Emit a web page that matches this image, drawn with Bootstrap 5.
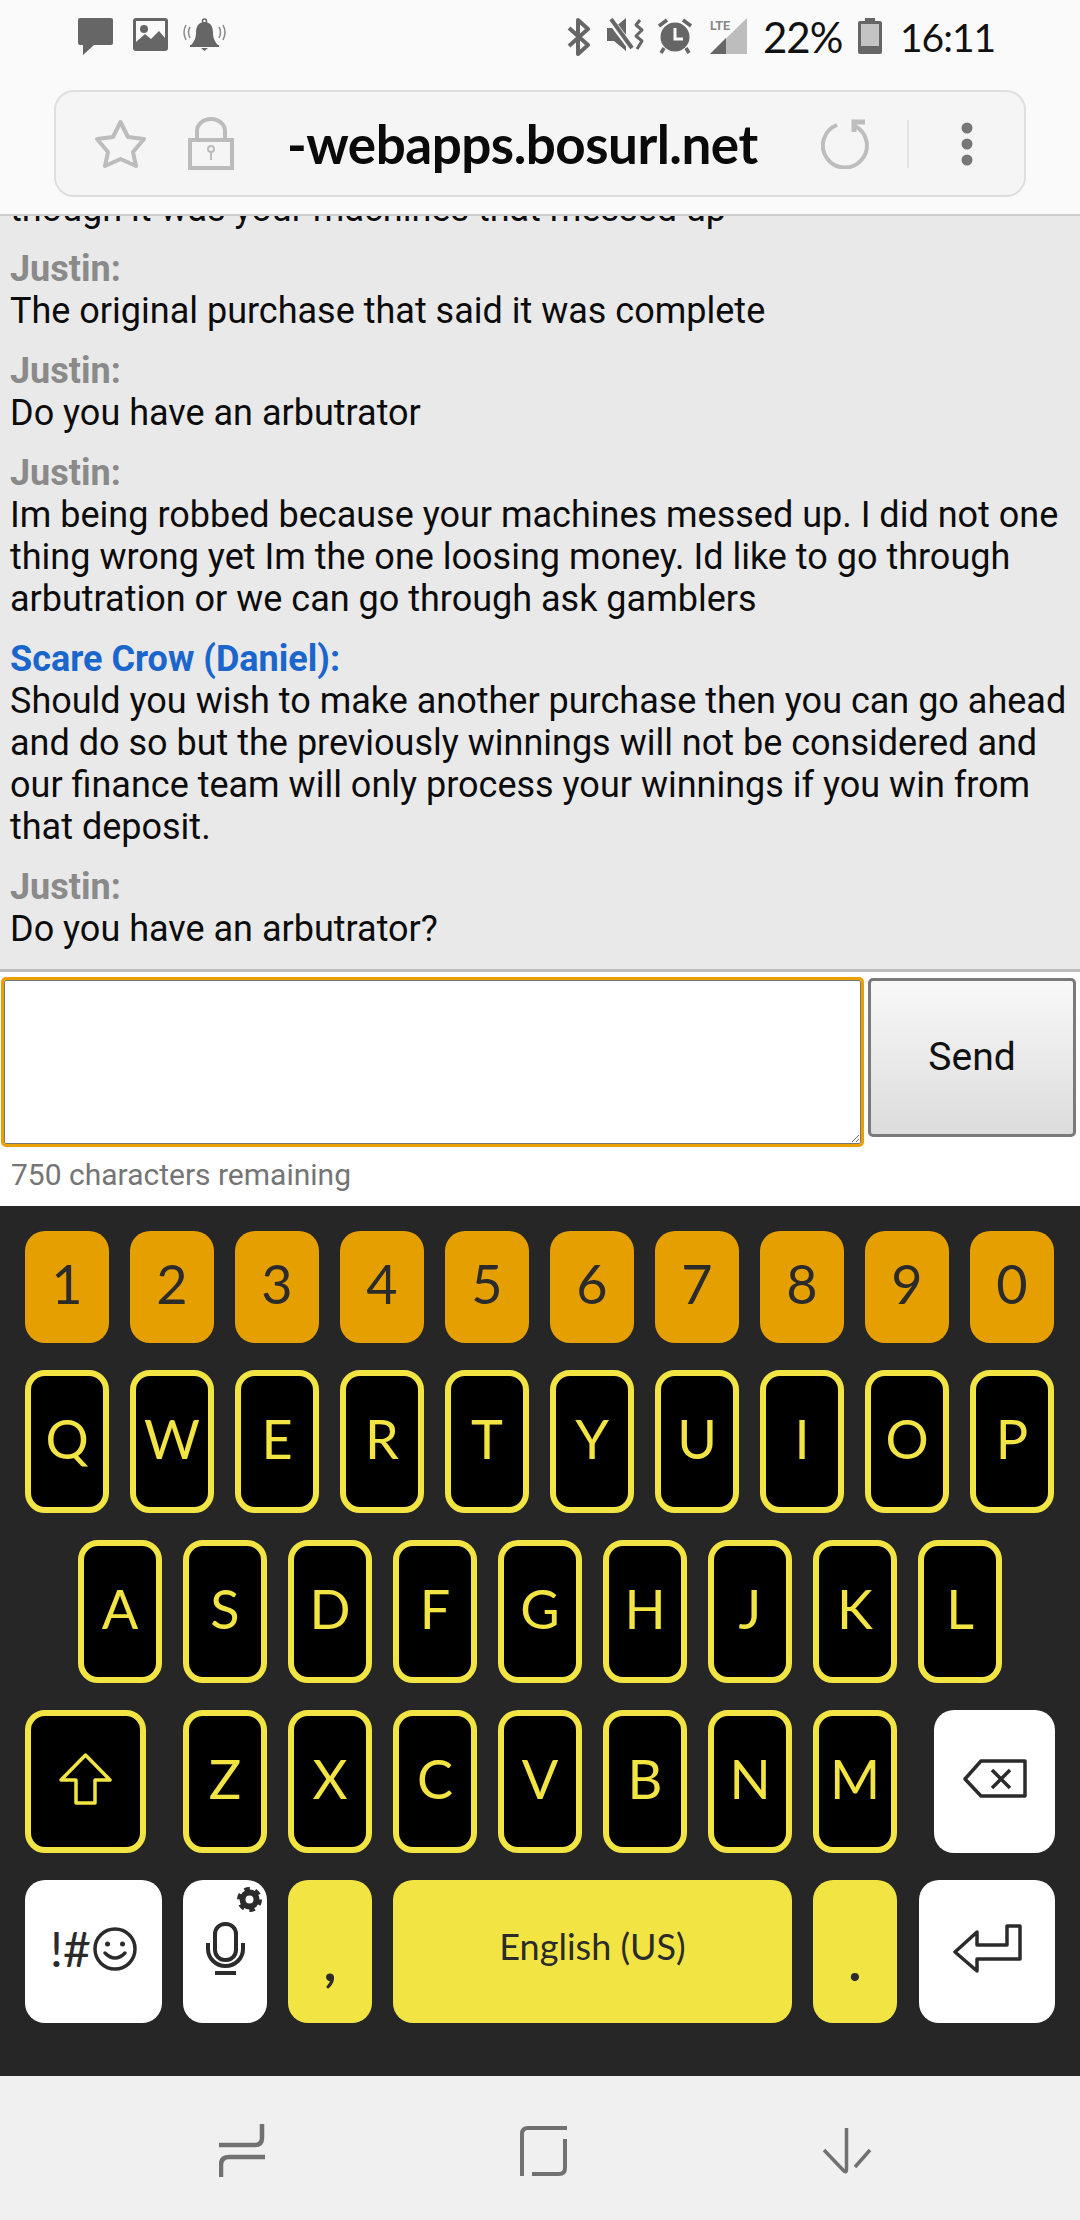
<!DOCTYPE html>
<html lang="en">
<head>
  <meta charset="UTF-8">
  <meta name="viewport" content="width=device-width, initial-scale=1.0">
  <title>Chat</title>
  <link href="https://cdn.jsdelivr.net/npm/bootstrap@5.3.0/dist/css/bootstrap.min.css" rel="stylesheet">
  <style>
    html, body { height: 2220px; overflow: hidden; }
    body { background: #fff; font-family: Roboto, sans-serif; }
    .hand { font-family: Lato, "Noto Sans", sans-serif; }

    /* status bar and address bar */
    .top-area { height: 216px; background: #fafafa; border-bottom: 2px solid #cfcfcf; flex: none; }
    .status-row { height: 90px; padding: 18px 88px 0 78px; align-items: flex-start; }
    .status-left { gap: 20px; }
    .status-left .bell-ico { margin-left: -5px; }
    .status-right svg { margin-left: 17px; }
    .status-right .ico-bt { margin-left: 0; }
    .status-right .ico-alarm { margin-left: 12px; }
    .status-right .ico-batt { margin-left: 15px; }
    .status-text { font-size: 39px; line-height: 38px; color: #111; white-space: nowrap; }
    .status-pct { font-size: 42px; margin-left: 16px; width: 80px; letter-spacing: -1px; }
    .status-time { margin-left: 18px; width: 92px; letter-spacing: -1px; }
    .url-bar { height: 107px; margin: 0 54px; background: #f5f5f5; border: 2px solid #dedede; border-radius: 20px; padding-left: 39px; }
    .url-lock { margin-left: 42px; }
    .url-text { font-size: 53px; font-weight: 700; color: #0a0a0a; margin-left: 53px; width: 475px; white-space: nowrap; letter-spacing: -.5px; line-height: 1; }
    .url-reload { margin-left: 59px; }
    .url-sep { width: 2px; height: 48px; background: #e2e2e2; margin-left: 35px; }
    .url-dots { margin-left: 52px; }

    /* chat log */
    .chat-log { flex: 1 1 0; min-height: 0; overflow: hidden; background: #e9e9e9; border-bottom: 3px solid #bdbdbd; padding: 0 10px 1px; }
    .chat-msg { margin-bottom: 18px; font-size: 36px; line-height: 42px; color: #0c0c0c; }
    .chat-name { font-weight: 700; color: #8a8a8a; }
    .chat-name-staff { color: #1a66cc; }

    /* message box */
    .compose { height: 234px; flex: none; background: #fff; padding: 6px 4px 0; }
    .compose-row { gap: 7px; }
    .msg-input { width: 857px; height: 164px; margin-top: 2px; flex: none; border: 1px solid #767676; border-radius: 2px; outline: 3px solid #e9a000; box-shadow: none; }
    .send-btn { width: 208px; height: 159px; padding: 0; font-size: 39px; color: #111; background: linear-gradient(#f8f8f8, #dcdcdc); border: 3px solid #7a7a7a; border-radius: 5px; }
    .char-count { margin: 16px 0 0 7px; font-size: 30px; line-height: 30px; color: #757575; }

    /* keyboard */
    .kb { height: 870px; flex: none; background: #262626; padding: 25px 25px 0; gap: 27px; }
    .kb-row { gap: 21px; height: 143px; }
    .kb-row-num { height: 112px; }
    .kb-group { gap: 21px; }
    .kb-key { width: 84px; height: 100%; flex: none; border-radius: 20px; font-size: 54px; line-height: 1; padding-bottom: 6px; position: relative; }
    .kb-letter { background: #000; border: 6px solid #f2e543; color: #f2e543; }
    .kb-num { background: #e5a000; color: #2b2b2b; }
    .kb-yellow { background: #f2e543; color: #2b2b2b; }
    .kb-white { background: #fff; color: #2b2b2b; }
    .kb-shift, .kb-back { width: 121px; }
    .kb-sym { width: 137px; gap: 2px; font-size: 48px; }
    .kb-space { flex: 1 1 0; width: auto; font-size: 36px; padding-bottom: 12px; }
    .kb-punct { padding: 18px 0 0; font-weight: 700; }
    .kb-enter { width: 136px; margin-left: 1px; }
    .mic-gear { position: absolute; top: 7px; right: 5px; }

    /* android nav */
    .nav-area { height: 144px; flex: none; background: #f0f0f0; padding: 48px 208px 0 219px; align-items: flex-start; }
    .nav-home { margin-top: 2px; }
    .nav-back { margin-top: 4px; }
  </style>
</head>
<body>
  <div class="d-flex flex-column vh-100">

    <div class="top-area">
      <div class="status-row d-flex justify-content-between">
        <div class="status-left d-flex">
          <svg width="35" height="37" viewBox="0 0 35 37"><path fill="#666" d="M2 0H33a2 2 0 0 1 2 2V25a2 2 0 0 1-2 2H16L5 37V27H2a2 2 0 0 1-2-2V2a2 2 0 0 1 2-2Z"/></svg>
          <svg width="35" height="33" viewBox="0 0 35 33"><rect width="35" height="33" rx="3" fill="#666"/><rect x="3" y="3" width="29" height="25" fill="#fafafa"/><circle cx="11" cy="11" r="4" fill="#666"/><path fill="#666" d="M3 24L12 16L18 21L26 13L32 20V30H3Z"/></svg>
          <svg class="bell-ico" width="43" height="34" viewBox="0 0 43 34"><circle cx="21.5" cy="3" r="2" fill="none" stroke="#666" stroke-width="1.5"/><path fill="#666" d="M21.5 4C15 4 13 9 13 15C13 21 10 25 8 27H35C33 25 30 21 30 15C30 9 28 4 21.5 4Z"/><rect x="7" y="27" width="29" height="2" fill="#666"/><path fill="#666" d="M18 30H25L21.5 33Z"/><path fill="none" stroke="#888" stroke-width="1.5" d="M3 7Q-1 14 3 22M7 9Q4 14 7 20M40 7Q44 14 40 22M36 9Q39 14 36 20"/></svg>
        </div>
        <div class="status-right d-flex">
          <svg class="ico-bt" width="23" height="38" viewBox="0 0 23 38"><path fill="none" stroke="#666" stroke-width="4" stroke-linejoin="round" d="M2 10L21 27L11 36V2L21 11L2 28"/></svg>
          <svg width="38" height="34" viewBox="0 0 38 34"><path fill="#666" d="M0 10H7L19 0V33L7 23H0Z"/><path stroke="#fafafa" stroke-width="7" d="M2 0L26 32"/><path stroke="#666" stroke-width="4" d="M4 1L25 30"/><path fill="none" stroke="#666" stroke-width="3" stroke-linejoin="round" d="M33 2L29 7L35 12L29 18L35 23L30 31"/></svg>
          <svg class="ico-alarm" width="36" height="37" viewBox="0 0 36 37"><circle cx="18" cy="19" r="14.5" fill="#666"/><path fill="none" stroke="#fafafa" stroke-width="3" d="M18 10V21H26"/><path stroke="#666" stroke-width="3.5" d="M2 8L10 2M34 8L26 2M7 30L4 35M29 30L32 35"/></svg>
          <svg width="37" height="36" viewBox="0 0 37 36"><path fill="#bdbdbd" d="M37 0V36H0Z"/><path fill="#666" d="M16 20V36H0Z"/><rect x="0" y="0" width="24" height="13" fill="#fafafa"/><text x="0" y="11.5" font-family="Roboto, sans-serif" font-size="12.5" font-weight="700" fill="#888">LTE</text></svg>
          <span class="hand status-text status-pct">22%</span>
          <svg class="ico-batt" width="24" height="36" viewBox="0 0 24 36"><path fill="#666" d="M7 0H17V3H22a2 2 0 0 1 2 2V34a2 2 0 0 1-2 2H2a2 2 0 0 1-2-2V5a2 2 0 0 1 2-2H7Z"/><rect x="3" y="6" width="18" height="22" fill="#c4c4c4"/></svg>
          <span class="hand status-text status-time">16:11</span>
        </div>
      </div>
      <div class="url-bar d-flex align-items-center">
        <svg width="51" height="50" viewBox="0 0 51 50"><path fill="none" stroke="#bcbcbc" stroke-width="4" stroke-linejoin="round" d="M25.5 3L33 18L49 20L38 33L41 47L25.5 40L10 47L13 33L2 20L18 18Z"/></svg>
        <svg class="url-lock" width="46" height="53" viewBox="0 0 46 53"><path fill="none" stroke="#bcbcbc" stroke-width="4" d="M2 23H44V51H2ZM9 23V14a14 12 0 0 1 28 0V23"/><circle cx="23" cy="32" r="3" fill="none" stroke="#bcbcbc" stroke-width="2"/><path stroke="#bcbcbc" stroke-width="2" d="M23 35V43"/></svg>
        <span class="hand url-text">-webapps.bosurl.net</span>
        <svg class="url-reload" width="51" height="50" viewBox="0 0 51 50"><path fill="none" stroke="#bdbdbd" stroke-width="4" d="M16 6A22 22 0 1 0 34 7"/><path fill="none" stroke="#bdbdbd" stroke-width="5" d="M33 13V3H44"/></svg>
        <span class="url-sep"></span>
        <svg class="url-dots" width="12" height="44" viewBox="0 0 12 44"><circle cx="6" cy="6" r="5.5" fill="#777"/><circle cx="6" cy="22" r="5.5" fill="#777"/><circle cx="6" cy="38" r="5.5" fill="#777"/></svg>
      </div>
    </div>

    <div class="chat-log d-flex flex-column justify-content-end">
      <div class="chat-msg">though it was your machines that messed up</div>
      <div class="chat-msg"><div class="chat-name">Justin:</div>The original purchase that said it was complete</div>
      <div class="chat-msg"><div class="chat-name">Justin:</div>Do you have an arbutrator</div>
      <div class="chat-msg"><div class="chat-name">Justin:</div>Im being robbed because your machines messed up. I did not one thing wrong yet Im the one loosing money. Id like to go through arbutration or we can go through ask gamblers</div>
      <div class="chat-msg"><div class="chat-name chat-name-staff">Scare Crow (Daniel):</div>Should you wish to make another purchase then you can go ahead and do so but the previously winnings will not be considered and our finance team will only process your winnings if you win from that deposit.</div>
      <div class="chat-msg"><div class="chat-name">Justin:</div>Do you have an arbutrator?</div>
    </div>

    <div class="compose">
      <div class="compose-row d-flex align-items-start">
        <textarea class="form-control msg-input"></textarea>
        <button type="button" class="btn send-btn">Send</button>
      </div>
      <div class="char-count">750 characters remaining</div>
    </div>

    <div class="kb d-flex flex-column hand">
      <div class="kb-row kb-row-num d-flex">
        <div class="kb-key kb-num d-flex align-items-center justify-content-center">1</div>
        <div class="kb-key kb-num d-flex align-items-center justify-content-center">2</div>
        <div class="kb-key kb-num d-flex align-items-center justify-content-center">3</div>
        <div class="kb-key kb-num d-flex align-items-center justify-content-center">4</div>
        <div class="kb-key kb-num d-flex align-items-center justify-content-center">5</div>
        <div class="kb-key kb-num d-flex align-items-center justify-content-center">6</div>
        <div class="kb-key kb-num d-flex align-items-center justify-content-center">7</div>
        <div class="kb-key kb-num d-flex align-items-center justify-content-center">8</div>
        <div class="kb-key kb-num d-flex align-items-center justify-content-center">9</div>
        <div class="kb-key kb-num d-flex align-items-center justify-content-center">0</div>
      </div>
      <div class="kb-row d-flex">
        <div class="kb-key kb-letter d-flex align-items-center justify-content-center">Q</div>
        <div class="kb-key kb-letter d-flex align-items-center justify-content-center">W</div>
        <div class="kb-key kb-letter d-flex align-items-center justify-content-center">E</div>
        <div class="kb-key kb-letter d-flex align-items-center justify-content-center">R</div>
        <div class="kb-key kb-letter d-flex align-items-center justify-content-center">T</div>
        <div class="kb-key kb-letter d-flex align-items-center justify-content-center">Y</div>
        <div class="kb-key kb-letter d-flex align-items-center justify-content-center">U</div>
        <div class="kb-key kb-letter d-flex align-items-center justify-content-center">I</div>
        <div class="kb-key kb-letter d-flex align-items-center justify-content-center">O</div>
        <div class="kb-key kb-letter d-flex align-items-center justify-content-center">P</div>
      </div>
      <div class="kb-row d-flex justify-content-center">
        <div class="kb-key kb-letter d-flex align-items-center justify-content-center">A</div>
        <div class="kb-key kb-letter d-flex align-items-center justify-content-center">S</div>
        <div class="kb-key kb-letter d-flex align-items-center justify-content-center">D</div>
        <div class="kb-key kb-letter d-flex align-items-center justify-content-center">F</div>
        <div class="kb-key kb-letter d-flex align-items-center justify-content-center">G</div>
        <div class="kb-key kb-letter d-flex align-items-center justify-content-center">H</div>
        <div class="kb-key kb-letter d-flex align-items-center justify-content-center">J</div>
        <div class="kb-key kb-letter d-flex align-items-center justify-content-center">K</div>
        <div class="kb-key kb-letter d-flex align-items-center justify-content-center">L</div>
      </div>
      <div class="kb-row d-flex justify-content-between">
        <div class="kb-key kb-letter kb-shift d-flex align-items-center justify-content-center">
          <svg width="53" height="52" viewBox="0 0 53 52"><path fill="none" stroke="#f2e543" stroke-width="3.5" stroke-linejoin="round" d="M26.5 2L51 27H36V50H17V27H2Z"/></svg>
        </div>
        <div class="kb-group d-flex">
          <div class="kb-key kb-letter d-flex align-items-center justify-content-center">Z</div>
          <div class="kb-key kb-letter d-flex align-items-center justify-content-center">X</div>
          <div class="kb-key kb-letter d-flex align-items-center justify-content-center">C</div>
          <div class="kb-key kb-letter d-flex align-items-center justify-content-center">V</div>
          <div class="kb-key kb-letter d-flex align-items-center justify-content-center">B</div>
          <div class="kb-key kb-letter d-flex align-items-center justify-content-center">N</div>
          <div class="kb-key kb-letter d-flex align-items-center justify-content-center">M</div>
        </div>
        <div class="kb-key kb-white kb-back d-flex align-items-center justify-content-center">
          <svg width="64" height="39" viewBox="0 0 64 39"><path fill="none" stroke="#2b2b2b" stroke-width="3.5" stroke-linejoin="round" d="M18 2H62V37H18L2 20Z"/><path stroke="#2b2b2b" stroke-width="3.5" d="M29 11L47 29M47 11L29 29"/></svg>
        </div>
      </div>
      <div class="kb-row d-flex">
        <div class="kb-key kb-white kb-sym d-flex align-items-center justify-content-center">
          <span>!#</span>
          <svg width="44" height="44" viewBox="0 0 44 44"><circle cx="22" cy="22" r="20" fill="none" stroke="#2b2b2b" stroke-width="3.5"/><circle cx="14.5" cy="17" r="2.5" fill="#2b2b2b"/><circle cx="29.5" cy="17" r="2.5" fill="#2b2b2b"/><path fill="none" stroke="#2b2b2b" stroke-width="3.5" stroke-linecap="round" d="M12 26Q22 36 32 26"/></svg>
        </div>
        <div class="kb-key kb-white d-flex align-items-center justify-content-center">
          <svg width="41" height="54" viewBox="0 0 41 54"><rect x="10" y="2" width="21" height="36" rx="10" fill="none" stroke="#2b2b2b" stroke-width="4"/><path fill="none" stroke="#2b2b2b" stroke-width="4" d="M3 21V27a17.500 17 0 0 0 35 0V21"/><rect x="10" y="49" width="21" height="4" fill="#2b2b2b"/></svg>
          <svg class="mic-gear" width="25" height="25" viewBox="0 0 25 25"><circle cx="12.500" cy="12.500" r="7" fill="none" stroke="#2b2b2b" stroke-width="6"/><circle cx="12.500" cy="12.500" r="10.500" fill="none" stroke="#2b2b2b" stroke-width="4" stroke-dasharray="5.500 5.500"/></svg>
        </div>
        <div class="kb-key kb-yellow kb-punct d-flex align-items-center justify-content-center">,</div>
        <div class="kb-key kb-yellow kb-space d-flex align-items-center justify-content-center">English (US)</div>
        <div class="kb-key kb-yellow kb-punct d-flex align-items-center justify-content-center">.</div>
        <div class="kb-key kb-white kb-enter d-flex align-items-center justify-content-center">
          <svg width="69" height="49" viewBox="0 0 69 49"><path fill="none" stroke="#2b2b2b" stroke-width="3.5" stroke-linejoin="round" d="M2 28L24 8V21H54V2H67V35H24V47Z"/></svg>
        </div>
      </div>
    </div>

    <div class="nav-area d-flex justify-content-between">
      <svg width="46" height="53" viewBox="0 0 46 53"><path fill="none" stroke="#717171" stroke-width="4.500" d="M0 21H36Q43 21 43 14V0M46 33H10Q2 33 2 41V53"/></svg>
      <svg class="nav-home" width="47" height="50" viewBox="0 0 47 50"><path fill="none" stroke="#717171" stroke-width="4" d="M2 50V8Q2 2 8 2H47M45 13V42Q45 48 39 48H12"/></svg>
      <svg class="nav-back" width="50" height="46" viewBox="0 0 50 46"><path fill="none" stroke="#717171" stroke-width="3.500" d="M24.500 0V41Q24.500 46 21 42L2 22M48 22L33 39"/></svg>
    </div>
  </div>
</body>
</html>
